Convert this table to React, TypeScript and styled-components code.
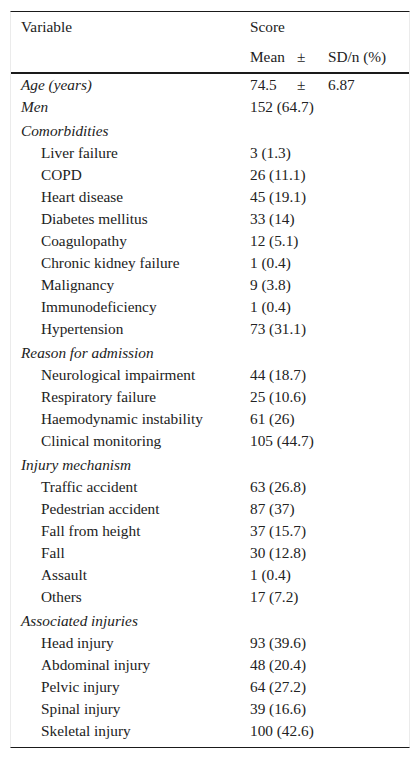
import React from "react";
import styled, { createGlobalStyle } from "styled-components";

const Global = createGlobalStyle`
  html, body { margin: 0; padding: 0; background: #fff; }
  body { font-family: "Liberation Serif", "Times New Roman", serif; color: #222; }
`;

const Wrap = styled.div`
  padding: 11px 10px 0 10px;
`;

const Table = styled.div`
  display: grid;
  grid-template-columns: 239px 1fr;
  border-top: 1px solid #1a1a1a;
  border-bottom: 1px solid #1a1a1a;
  border-left: 1px solid #ebebeb;
  border-right: 1px solid #ebebeb;
  font-family: "Liberation Serif", "Times New Roman", serif;
  font-size: 15.3px;
  line-height: 22px;
`;

const HeaderBlock = styled.div`
  grid-column: 1 / -1;
  display: grid;
  grid-template-columns: 239px 1fr;
  grid-template-rows: 30px 30px;
`;

const HLabel = styled.div`
  padding-left: 10px;
  display: flex;
  align-items: center;
`;

const HValue = styled.div`
  display: flex;
  align-items: center;
`;

const HeadRule = styled.div`
  grid-column: 1 / -1;
  height: 2px;
  background: #1a1a1a;
`;

const Body = styled.div`
  grid-column: 1 / -1;
  display: grid;
  grid-template-columns: 239px 1fr;
  padding: 0 0 5px 0;
`;

const Label = styled.div<{ $indent?: boolean; $section?: boolean; $italic?: boolean }>`
  padding-left: ${(p) => (p.$indent ? "30px" : "10px")};
  padding-top: ${(p) => (p.$section ? "2px" : "0")};
  font-style: ${(p) => (p.$italic ? "italic" : "normal")};
`;

const Value = styled.div<{ $section?: boolean }>`
  padding-top: ${(p) => (p.$section ? "2px" : "0")};
`;

const Split = styled.span`
  display: inline-grid;
  grid-template-columns: 47px 31px auto;
`;

type Row = { label: string; value?: React.ReactNode; indent?: boolean; italic?: boolean; section?: boolean };

const rows: Row[] = [
  { label: "Age (years)", italic: true, value: <Split><span>74.5</span><span>±</span><span>6.87</span></Split> },
  { label: "Men", italic: true, value: "152 (64.7)" },
  { label: "Comorbidities", italic: true, section: true },
  { label: "Liver failure", indent: true, value: "3 (1.3)" },
  { label: "COPD", indent: true, value: "26 (11.1)" },
  { label: "Heart disease", indent: true, value: "45 (19.1)" },
  { label: "Diabetes mellitus", indent: true, value: "33 (14)" },
  { label: "Coagulopathy", indent: true, value: "12 (5.1)" },
  { label: "Chronic kidney failure", indent: true, value: "1 (0.4)" },
  { label: "Malignancy", indent: true, value: "9 (3.8)" },
  { label: "Immunodeficiency", indent: true, value: "1 (0.4)" },
  { label: "Hypertension", indent: true, value: "73 (31.1)" },
  { label: "Reason for admission", italic: true, section: true },
  { label: "Neurological impairment", indent: true, value: "44 (18.7)" },
  { label: "Respiratory failure", indent: true, value: "25 (10.6)" },
  { label: "Haemodynamic instability", indent: true, value: "61 (26)" },
  { label: "Clinical monitoring", indent: true, value: "105 (44.7)" },
  { label: "Injury mechanism", italic: true, section: true },
  { label: "Traffic accident", indent: true, value: "63 (26.8)" },
  { label: "Pedestrian accident", indent: true, value: "87 (37)" },
  { label: "Fall from height", indent: true, value: "37 (15.7)" },
  { label: "Fall", indent: true, value: "30 (12.8)" },
  { label: "Assault", indent: true, value: "1 (0.4)" },
  { label: "Others", indent: true, value: "17 (7.2)" },
  { label: "Associated injuries", italic: true, section: true },
  { label: "Head injury", indent: true, value: "93 (39.6)" },
  { label: "Abdominal injury", indent: true, value: "48 (20.4)" },
  { label: "Pelvic injury", indent: true, value: "64 (27.2)" },
  { label: "Spinal injury", indent: true, value: "39 (16.6)" },
  { label: "Skeletal injury", indent: true, value: "100 (42.6)" },
];

export default function App() {
  return (
    <>
      <Global />
      <Wrap>
        <Table>
          <HeaderBlock>
            <HLabel>Variable</HLabel>
            <HValue>Score</HValue>
            <HLabel />
            <HValue>
              <Split>
                <span>Mean</span>
                <span>±</span>
                <span>SD/n (%)</span>
              </Split>
            </HValue>
          </HeaderBlock>
          <HeadRule />
          <Body>
            {rows.map((r, i) => (
              <React.Fragment key={i}>
                <Label $indent={r.indent} $italic={r.italic} $section={r.section}>
                  {r.label}
                </Label>
                <Value $section={r.section}>{r.value ?? ""}</Value>
              </React.Fragment>
            ))}
          </Body>
        </Table>
      </Wrap>
    </>
  );
}
